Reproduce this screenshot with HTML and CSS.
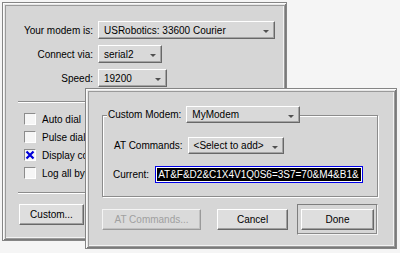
FILE: index.html
```html
<!DOCTYPE html>
<html lang="en">
<head>
  <meta charset="UTF-8" />
  <title>Modem Setup</title>
  <link rel="stylesheet" href="styles.css">
</head>
<body>
  <div class="win main-win">
    <div class="form-grid">
      <label class="lbl">Your modem is:</label>
      <div class="opt opt-modem"><span>USRobotics: 33600 Courier</span><i class="arr"></i></div>
      <label class="lbl">Connect via:</label>
      <div class="opt opt-port"><span>serial2</span><i class="arr"></i></div>
      <label class="lbl">Speed:</label>
      <div class="opt opt-speed"><span>19200</span><i class="arr"></i></div>
    </div>

    <hr class="sep" />

    <ul class="checks">
      <li><span class="box"></span>Auto dial</li>
      <li><span class="box"></span>Pulse dialing</li>
      <li><span class="box checked"><svg viewBox="0 0 10 10" width="10" height="10"><path d="M1.5 1.5L8.5 8.5M8.5 1.5L1.5 8.5" stroke="#0000d8" stroke-width="2.2" /></svg></span>Display connection log</li>
      <li><span class="box"></span>Log all bytes</li>
    </ul>

    <hr class="sep sep-low" />

    <button class="btn btn-custom">Custom...</button>
  </div>

  <div class="win dialog">
    <div class="group">
      <div class="legend">
        <span>Custom Modem:</span>
        <div class="opt opt-custom"><span>MyModem</span><i class="arr"></i></div>
      </div>
      <div class="field-row">
        <span>AT Commands:</span>
        <div class="opt opt-add"><span>&lt;Select to add&gt;</span><i class="arr"></i></div>
      </div>
      <div class="field-row current-row">
        <span>Current:</span>
        <div class="cmd-field"><span class="cmd-sel">AT&amp;F&amp;D2&amp;C1X4V1Q0S6=3S7=70&amp;M4&amp;B1&amp;</span></div>
      </div>
    </div>

    <div class="actions">
      <button class="btn btn-at" disabled>AT Commands...</button>
      <button class="btn btn-cancel">Cancel</button>
      <div class="default-ring"><button class="btn btn-done">Done</button></div>
    </div>
  </div>
</body>
</html>
```

FILE: styles.css
```css
:root {
  --face: #d6d6d6;
  --btn-face: #dedede;
  --hi: #ffffff;
  --lo: #686868;
  --mid: #8c8c8c;
}

* { box-sizing: border-box; }
body {
  margin: 0;
  padding: 2px;
  background: #f5f5f5;
  font-family: "Liberation Sans", Arial, sans-serif;
  font-size: 10px;
  color: #000;
}

/* window frame: outer line + raised bevel + sunken inner line */
.win {
  background: var(--face);
  border: 1px solid #858585;
  box-shadow:
    inset 1px 1px 0 #fbfbfb,
    inset -1px -1px 0 #7a7a7a,
    inset 2px 2px 0 #e6e6e6,
    inset -2px -2px 0 #9c9c9c,
    inset 3px 3px 0 #9a9a9a,
    inset -3px -3px 0 #f2f2f2;
}

.main-win {
  width: 285px;
  height: 239px;
  padding: 18px 8px 0 15px;
}

.form-grid {
  display: grid;
  grid-template-columns: 75px auto;
  grid-auto-rows: 18px;
  column-gap: 5px;
  row-gap: 6px;
  justify-items: start;
}
.lbl { justify-self: end; align-self: center; }

.opt {
  display: flex;
  align-items: center;
  height: 18px;
  padding: 0 5px 0 5px;
  background: #d9d9d9;
  border: 1px solid;
  border-color: var(--hi) var(--lo) var(--lo) var(--hi);
  box-shadow: inset -1px -1px 0 #a4a4a4;
  white-space: nowrap;
}
.opt .arr {
  margin-left: auto;
  margin-top: 3px;
  width: 0;
  height: 0;
  border-left: 3px solid transparent;
  border-right: 3px solid transparent;
  border-top: 3px solid #505050;
}
.opt-modem { width: 177px; }
.opt-port  { width: 64px; }
.opt-speed { width: 69px; }

.sep {
  height: 0;
  margin: 14px 0 0;
  border: 0;
  border-top: 1px solid var(--mid);
  border-bottom: 1px solid var(--hi);
}
.sep-low { margin-top: 10px; }

.checks { list-style: none; margin: 7px 0 0; padding: 0 0 0 6px; }
.checks li { display: flex; align-items: center; height: 18px; white-space: nowrap; }
.box {
  display: flex;
  align-items: center;
  justify-content: center;
  width: 12px;
  height: 12px;
  margin-right: 6px;
  background: #f6f6f6;
  border: 1px solid;
  border-color: var(--mid) var(--hi) var(--hi) var(--mid);
}

.btn {
  height: 21px;
  padding: 0;
  font: inherit;
  color: #000;
  background: var(--btn-face);
  border: 1px solid;
  border-color: var(--hi) var(--lo) var(--lo) var(--hi);
  box-shadow: inset -1px -1px 0 #a0a0a0;
}
.btn:disabled {
  color: #a0a0a0;
  background: #dadada;
  border-color: #f4f4f4 #9a9a9a #9a9a9a #f4f4f4;
  box-shadow: inset -1px -1px 0 #c0c0c0;
}
.btn-custom { display: block; width: 65px; margin: 10px 0 0 1px; }

/* dialog floats over the main window */
.dialog {
  position: absolute;
  left: 85px;
  top: 88px;
  width: 312px;
  height: 161px;
  padding: 26px 18px 0 16px;
}

.group {
  border: 1px solid var(--mid);
  box-shadow: inset 1px 1px 0 var(--hi), 1px 1px 0 var(--hi);
  padding: 0 0 13px;
}
.legend {
  display: flex;
  align-items: center;
  gap: 5px;
  width: fit-content;
  height: 17px;
  margin: -10px 0 0 4px;
  padding-left: 1px;
  background: var(--face);
}
.opt-custom { width: 114px; height: 17px; }
.opt-add    { width: 96px; height: 17px; }

.field-row {
  display: flex;
  align-items: center;
  gap: 5px;
  height: 17px;
  margin: 14px 0 0 11px;
}
.current-row { gap: 6px; margin: 12px 0 0 10px; }

.cmd-field {
  display: flex;
  align-items: center;
  width: 208px;
  height: 17px;
  padding-left: 2px;
  overflow: hidden;
  white-space: nowrap;
  background: #000;
  color: #fff;
  border: 1px solid #0000e8;
  box-shadow: inset 0 0 0 1px #fff;
}

.actions {
  display: flex;
  align-items: center;
  margin-top: 7px;
}
.btn-at     { width: 102px; }
.btn-cancel { width: 73px; margin-left: 16px; }
.default-ring {
  width: 81px;
  height: 31px;
  margin-left: 9px;
  padding: 4px 3px;
  border: 1px solid;
  border-color: #7e7e7e #f4f4f4 #f4f4f4 #7e7e7e;
  box-shadow: inset -1px -1px 0 #8a8a8a;
}
.btn-done { width: 73px; }
```
